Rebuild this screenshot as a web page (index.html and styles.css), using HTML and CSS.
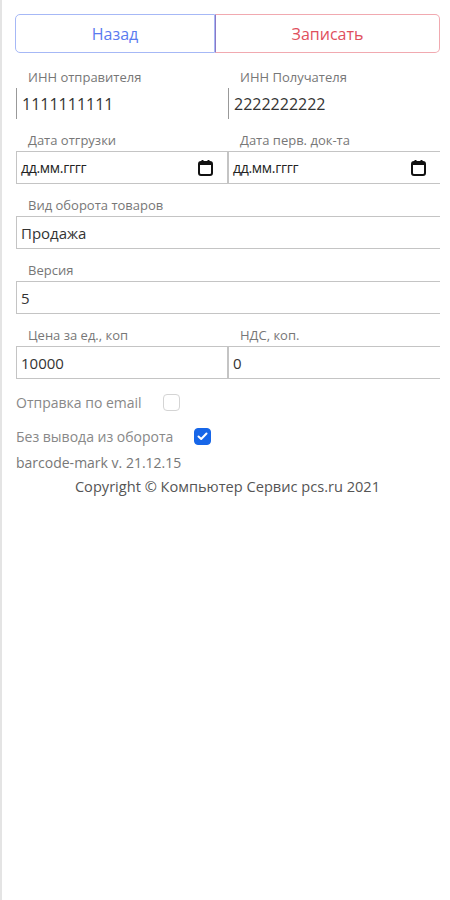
FILE: index.html
```html
<!DOCTYPE html>
<html lang="ru">
<head>
    <meta charset="UTF-8">
    <meta name="viewport" content="width=device-width, initial-scale=1.0">
    <title>barcode-mark</title>
    <link rel="stylesheet" href="styles.css">
</head>
<body>
    <div class="page">
        <div class="actions">
            <button class="btn btn-back">Назад</button>
            <button class="btn btn-save">Записать</button>
        </div>

        <div class="row">
            <div class="field">
                <div class="label">ИНН отправителя</div>
                <div class="input input-bare">1111111111</div>
            </div>
            <div class="field">
                <div class="label">ИНН Получателя</div>
                <div class="input input-bare">2222222222</div>
            </div>
        </div>

        <div class="row">
            <div class="field">
                <div class="label">Дата отгрузки</div>
                <div class="input input-date">
                    <span>дд.мм.гггг</span>
                    <svg class="cal" width="15" height="17" viewBox="0 0 15 17">
                        <rect x="1" y="3" width="13" height="13" rx="2" fill="none" stroke="#111" stroke-width="2"/>
                        <rect x="1" y="3" width="13" height="3" fill="#111"/>
                        <rect x="3.5" y="1" width="2" height="3" fill="#111"/>
                        <rect x="9.5" y="1" width="2" height="3" fill="#111"/>
                    </svg>
                </div>
            </div>
            <div class="field">
                <div class="label">Дата перв. док-та</div>
                <div class="input input-date last">
                    <span>дд.мм.гггг</span>
                    <svg class="cal" width="15" height="17" viewBox="0 0 15 17">
                        <rect x="1" y="3" width="13" height="13" rx="2" fill="none" stroke="#111" stroke-width="2"/>
                        <rect x="1" y="3" width="13" height="3" fill="#111"/>
                        <rect x="3.5" y="1" width="2" height="3" fill="#111"/>
                        <rect x="9.5" y="1" width="2" height="3" fill="#111"/>
                    </svg>
                </div>
            </div>
        </div>

        <div class="field">
            <div class="label">Вид оборота товаров</div>
            <div class="input last">Продажа</div>
        </div>

        <div class="field">
            <div class="label">Версия</div>
            <div class="input last">5</div>
        </div>

        <div class="row">
            <div class="field">
                <div class="label">Цена за ед., коп</div>
                <div class="input">10000</div>
            </div>
            <div class="field">
                <div class="label">НДС, коп.</div>
                <div class="input last">0</div>
            </div>
        </div>

        <div class="check-line first">
            <span>Отправка по email</span>
            <span class="box"></span>
        </div>
        <div class="check-line">
            <span>Без вывода из оборота</span>
            <span class="box checked">
                <svg width="11" height="9" viewBox="0 0 11 9">
                    <path d="M1.5 4.5 L4.2 7 L9.5 1.5" fill="none" stroke="#fff" stroke-width="2" stroke-linecap="round" stroke-linejoin="round"/>
                </svg>
            </span>
        </div>

        <div class="version">barcode-mark v. 21.12.15</div>
        <div class="copyright">Copyright © Компьютер Сервис pcs.ru 2021</div>
    </div>
</body>
</html>
```

FILE: styles.css
```css
body {
    margin: 0;
    font-family: "Open Sans", Arial, sans-serif;
    background-color: #fff;
    color: #333;
    border-left: 2px solid #e4e4e4;
    min-height: 100vh;
    box-sizing: border-box;
}

.page {
    width: 438px;
    padding: 14px 0 0 13px;
    box-sizing: border-box;
}

.actions {
    display: flex;
    width: 425px;
    margin-bottom: 15px;
}

.btn {
    flex: 1;
    height: 39px;
    background-color: #fff;
    font-family: "Open Sans", Arial, sans-serif;
    font-size: 16px;
    cursor: pointer;
}

.btn-back {
    flex: 0 0 200px;
    color: #5a7bf0;
    border: 1px solid #a6b8f6;
    border-radius: 5px 0 0 5px;
}

.btn-save {
    color: #e0505d;
    border: 1px solid #f1a9b0;
    border-left-color: #8c78c4;
    border-radius: 0 5px 5px 0;
}

.row {
    display: flex;
    width: 424px;
    margin-left: 1px;
}

.row .field {
    flex: 0 0 212px;
    margin-left: 0;
}

.field {
    margin-left: 1px;
    margin-bottom: 12px;
}

.label {
    height: 18px;
    line-height: 18px;
    padding-left: 12px;
    margin-bottom: 2px;
    font-size: 13px;
    color: #777;
}

.input {
    display: flex;
    align-items: center;
    height: 33px;
    padding: 0 4px;
    border: 1px solid #c4c4c4;
    box-sizing: border-box;
    font-size: 15px;
    color: #333;
    width: 424px;
}

.row .input {
    width: 212px;
}

.input.last {
    border-right: none;
}

.input-bare {
    border: none;
    border-left: 1px solid #999;
    padding-left: 5px;
    height: 31px;
    margin-top: 1px;
    font-size: 16px;
}

.input-date {
    justify-content: space-between;
    font-size: 14px;
    color: #222;
    padding-right: 14px;
}

.input-date span {
    letter-spacing: -0.3px;
}

.cal {
    display: block;
}

.check-line {
    display: flex;
    align-items: center;
    height: 18px;
    margin-left: 1px;
    margin-top: 16px;
    font-size: 14px;
    color: #888;
}

.check-line.first {
    margin-top: 2px;
}

.box {
    display: flex;
    align-items: center;
    justify-content: center;
    width: 17px;
    height: 17px;
    margin-left: 21px;
    border: 1px solid #d4d4d4;
    border-radius: 4px;
    box-sizing: border-box;
}

.check-line:last-of-type .box {
    margin-left: 24px;
}

.box.checked {
    background-color: #1766e8;
    border-color: #1766e8;
}

.version {
    height: 18px;
    line-height: 18px;
    margin-top: 9px;
    margin-left: 1px;
    font-size: 14px;
    color: #777;
}

.copyright {
    height: 18px;
    line-height: 18px;
    margin-top: 5px;
    width: 425px;
    text-align: center;
    font-size: 14.6px;
    color: #555;
}
```
